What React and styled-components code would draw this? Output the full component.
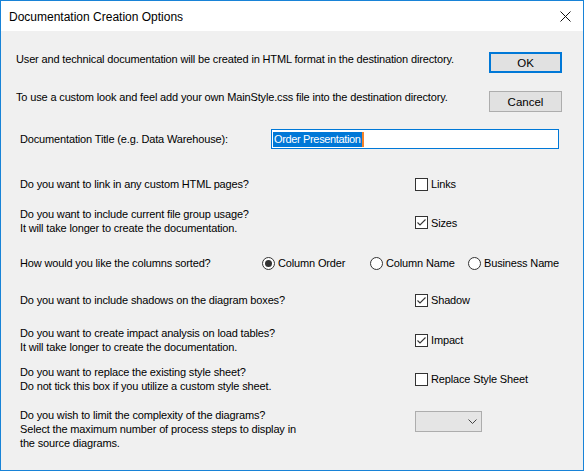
import React from 'react'
import styled, { createGlobalStyle } from 'styled-components'

const GlobalStyle = createGlobalStyle`
  html, body {
    margin: 0;
    padding: 0;
    background: #f0f0f0;
  }
  * {
    box-sizing: border-box;
  }
`

const Window = styled.div`
  width: 584px;
  height: 471px;
  border: 1px solid #1883d7;
  background: #f0f0f0;
  display: flex;
  flex-direction: column;
  font-family: "Liberation Sans", Arial, sans-serif;
  font-size: 11px;
  letter-spacing: -0.15px;
  color: #000;
  overflow: hidden;
`

const TitleBar = styled.div`
  height: 30px;
  background: #fff;
  display: flex;
  align-items: center;
  justify-content: space-between;
  padding: 0 5px 0 8px;
  flex-shrink: 0;
`

const Caption = styled.div`
  font-size: 12px;
  letter-spacing: 0;
  padding-top: 1px;
`

const CloseButton = styled.div`
  width: 26px;
  height: 26px;
  display: flex;
  align-items: center;
  justify-content: center;
`

const Body = styled.div`
  flex: 1;
  padding: 0 21px 0 15px;
`

const Header = styled.div`
  display: flex;
  justify-content: space-between;
  padding-top: 21px;
`

const Intro = styled.div`
  display: flex;
  flex-direction: column;
  gap: 24px;
`

const Line = styled.div`
  line-height: 14px;
  white-space: nowrap;
`

const Buttons = styled.div`
  display: flex;
  flex-direction: column;
  gap: 18px;
`

const Button = styled.div`
  width: 73px;
  height: 21px;
  background: #e1e1e1;
  border: ${p => (p.$default ? '2px solid #0078d7' : '1px solid #adadad')};
  display: flex;
  align-items: center;
  justify-content: center;
  font-size: 11.5px;
  letter-spacing: 0;
`

const Rows = styled.div`
  padding-left: 4px;
  padding-top: 17px;
`

const Row = styled.div`
  display: grid;
  grid-template-columns: ${p => p.$labelWidth || 395}px auto;
  align-items: center;
  margin-top: ${p => p.$gap || 0}px;
`

const Label = styled.div`
  line-height: 14px;
  white-space: nowrap;
`

const TextBox = styled.div`
  width: 288px;
  height: 20px;
  border: 1px solid #0078d7;
  background: #fff;
  display: flex;
  align-items: center;
  padding-left: 1px;
  font-size: 11px;
`

const Selected = styled.span`
  background: #0078d7;
  color: #fff;
  line-height: 15px;
  padding: 0 1px;
  letter-spacing: -0.35px;
`

const Caret = styled.span`
  width: 2px;
  height: 15px;
  background: #f5822a;
`

const Check = styled.label`
  display: flex;
  align-items: center;
  gap: 3px;
  line-height: 14px;
  margin-top: ${p => p.$nudge || 0}px;
`

const Box = styled.span`
  width: 13px;
  height: 13px;
  border: 1px solid #333;
  background: #fff;
  display: flex;
  align-items: center;
  justify-content: center;
`

const RadioGroup = styled.div`
  display: grid;
  grid-template-columns: 108px 98px auto;
`

const Radio = styled.label`
  display: flex;
  align-items: center;
  gap: 3px;
  line-height: 14px;
`

const Circle = styled.span`
  width: 13px;
  height: 13px;
  border-radius: 50%;
  border: 1px solid #333;
  background: #fff;
  display: flex;
  align-items: center;
  justify-content: center;
  &::after {
    content: '';
    width: 7px;
    height: 7px;
    border-radius: 50%;
    background: ${p => (p.$on ? '#333' : 'transparent')};
  }
`

const Combo = styled.div`
  width: 67px;
  height: 21px;
  background: #e5e5e5;
  border: 1px solid #adadad;
  align-self: start;
  margin-top: 3px;
  display: flex;
  align-items: center;
  justify-content: flex-end;
  padding-right: 4px;
`

function CheckBox({ label, checked, nudge }) {
  return (
    <Check $nudge={nudge}>
      <Box>
        {checked && (
          <svg width="11" height="11" viewBox="0 0 11 11">
            <path d="M1.5 5.5 L4 8 L9.5 2.5" fill="none" stroke="#333" strokeWidth="1.1" />
          </svg>
        )}
      </Box>
      {label}
    </Check>
  )
}

function RadioButton({ label, on }) {
  return (
    <Radio>
      <Circle $on={on} />
      {label}
    </Radio>
  )
}

export default function App() {
  return (
    <>
      <GlobalStyle />
      <Window>
        <TitleBar>
          <Caption>Documentation Creation Options</Caption>
          <CloseButton>
            <svg width="11" height="11" viewBox="0 0 11 11">
              <path d="M0.5 0.5 L10.5 10.5 M10.5 0.5 L0.5 10.5" stroke="#111" strokeWidth="1" />
            </svg>
          </CloseButton>
        </TitleBar>
        <Body>
          <Header>
            <Intro>
              <Line>User and technical documentation will be created in HTML format in the destination directory.</Line>
              <Line>To use a custom look and feel add your own MainStyle.css file into the destination directory.</Line>
            </Intro>
            <Buttons>
              <Button $default>OK</Button>
              <Button>Cancel</Button>
            </Buttons>
          </Header>
          <Rows>
            <Row $labelWidth={251}>
              <Label>Documentation Title (e.g. Data Warehouse):</Label>
              <TextBox>
                <Selected>Order Presentation</Selected>
                <Caret />
              </TextBox>
            </Row>
            <Row $gap={28}>
              <Label>Do you want to link in any custom HTML pages?</Label>
              <CheckBox label="Links" />
            </Row>
            <Row $gap={16}>
              <Label>
                Do you want to include current file group usage?<br />
                It will take longer to create the documentation.
              </Label>
              <CheckBox label="Sizes" checked nudge={3} />
            </Row>
            <Row $gap={21} $labelWidth={242}>
              <Label>How would you like the columns sorted?</Label>
              <RadioGroup>
                <RadioButton label="Column Order" on />
                <RadioButton label="Column Name" />
                <RadioButton label="Business Name" />
              </RadioGroup>
            </Row>
            <Row $gap={23}>
              <Label>Do you want to include shadows on the diagram boxes?</Label>
              <CheckBox label="Shadow" checked />
            </Row>
            <Row $gap={19}>
              <Label>
                Do you want to create impact analysis on load tables?<br />
                It will take longer to create the documentation.
              </Label>
              <CheckBox label="Impact" checked />
            </Row>
            <Row $gap={11}>
              <Label>
                Do you want to replace the existing style sheet?<br />
                Do not tick this box if you utilize a custom style sheet.
              </Label>
              <CheckBox label="Replace Style Sheet" />
            </Row>
            <Row $gap={15}>
              <Label>
                Do you wish to limit the complexity of the diagrams?<br />
                Select the maximum number of process steps to display in<br />
                the source diagrams.
              </Label>
              <Combo>
                <svg width="9" height="5" viewBox="0 0 9 5">
                  <path d="M0.5 0.5 L4.5 4.5 L8.5 0.5" fill="none" stroke="#444" strokeWidth="1" />
                </svg>
              </Combo>
            </Row>
          </Rows>
        </Body>
      </Window>
    </>
  )
}
